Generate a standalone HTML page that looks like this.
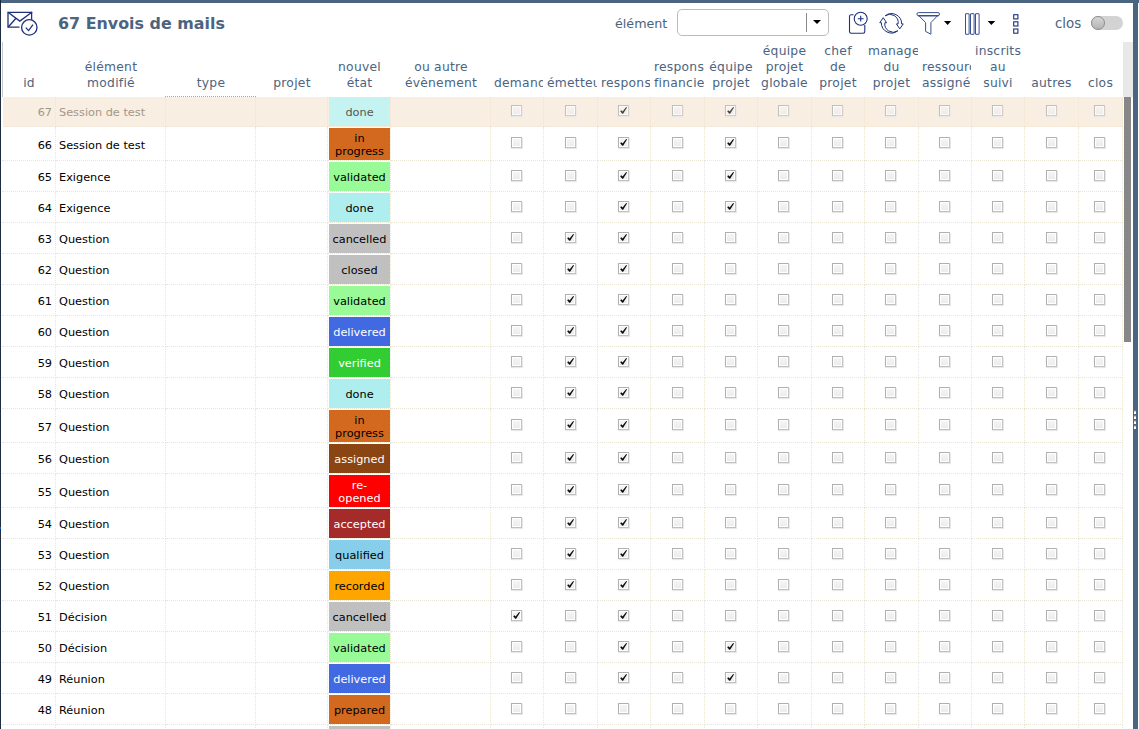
<!DOCTYPE html>
<html lang="fr"><head><meta charset="utf-8"><title>Envois de mails</title>
<style>
html,body{margin:0;padding:0;}
body{width:1139px;height:729px;overflow:hidden;background:#fff;position:relative;font-family:"DejaVu Sans","Liberation Sans",sans-serif;font-size:11.3px;color:#000;}
.abs{position:absolute;}
#topbar{left:0;top:0;width:1139px;height:3px;background:#4b6480;}
#leftb{left:0;top:0;width:1px;height:729px;background:#1e2d42;}
#rightb{left:1133px;top:0;width:5px;height:729px;background:#4b6480;}
#title{left:58px;top:14px;font-size:15.9px;font-weight:bold;color:#4b6480;white-space:nowrap;line-height:20px;}
.lbl{font-size:12.3px;color:#4b6480;white-space:nowrap;line-height:16px;}
#sel{left:677px;top:9px;width:150px;height:25px;border:1px solid #bcbcbc;border-radius:5px;background:#fff;}
#sel i{position:absolute;left:128px;top:3px;width:1px;height:19px;background:#8a8a8a;}
#sel b{position:absolute;left:135px;top:10px;width:0;height:0;border-left:4px solid transparent;border-right:4px solid transparent;border-top:4px solid #000;}
.hd{position:absolute;top:42px;height:54px;overflow:hidden;font-size:12.3px;letter-spacing:0.25px;color:#4b6480;line-height:16px;text-align:center;white-space:nowrap;}
.hd span{position:absolute;left:0;right:0;bottom:5px;}
.hd.c{text-align:left;}
.hd.c span{left:3px;right:3px;text-align:center;}
.row{position:absolute;left:2px;width:1121px;}
.row.sel{background:#f9eee2;color:#a3968a;}
.cell{position:absolute;top:0;bottom:0;border-right:1px dotted #e9e6d6;border-bottom:1px dotted #e9e6d6;box-sizing:border-box;}
.row.sel .cell{border-color:#f2e4d2;}
.id{text-align:right;padding-right:3px;}
.tx{white-space:nowrap;}
.st{position:absolute;left:1px;right:0;top:1px;bottom:0;padding-top:2px;box-sizing:border-box;text-align:center;line-height:13px;display:flex;align-items:center;justify-content:center;}
.cb{position:absolute;width:7px;height:7px;border:1px solid #b4b4b4;border-top-color:#b0b0b0;border-left-color:#b0b0b0;border-right-color:#c4c4c4;border-bottom-color:#c0c0c0;background:linear-gradient(#f6f6f6,#ebebeb);box-shadow:inset 0 0 0 1px #fff,1px 1px 0 #e8e8e8,0 1px 1px rgba(0,0,0,.08);padding:1px;}
.cb svg{position:absolute;left:0;top:0;width:9px;height:9px;}
.row.sel .cb{opacity:.75;}
</style></head><body>

<div class="abs" id="topbar"></div><div class="abs" id="leftb"></div><div class="abs" id="rightb"></div>
<div class="abs" style="left:2px;top:42px;width:1px;height:55px;background:#c8c8c8;"></div>
<div class="abs" style="left:165px;top:96px;width:91px;height:0;border-top:1px dotted #a8a8a8;"></div>
<svg class="abs" style="left:4px;top:8px" width="40" height="32" viewBox="4 8 40 32" fill="none" stroke="#1d3278" stroke-width="1.3">
<path d="M19.5 27.2H8V12.3H31.6V19.8"/><path d="M8 12.3L19.8 21.1L32.2 12"/><path d="M8 27.2L16 18.2"/>
<circle cx="29.3" cy="27.4" r="7.7" fill="#fff"/><path d="M25.8 27.6L28.6 30.6L33 24.6"/></svg>
<div class="abs" id="title">67 Envois de mails</div>
<div class="abs lbl" style="left:615px;top:16px;font-size:12.7px;">élément</div>
<div class="abs" id="sel"><i></i><b></b></div>
<svg class="abs" style="left:845px;top:8px" width="180" height="30" viewBox="845 8 180 30" fill="none" stroke="#1d3278" stroke-width="1.1">
<path d="M853.6 14.8H851.2Q849.5 14.8 849.5 16.5V31.6Q849.5 33.3 851.2 33.3H863.1Q864.8 33.3 864.8 31.6V25"/>
<circle cx="860.7" cy="18.7" r="6.5"/><path d="M857.8 18.7H863.6M860.7 15.8V21.6"/>
<path d="M885.2 15.8A10.1 10.1 0 0 1 901.6 23.9L903.2 23.9L899.8 28.9L896.4 23.9L898.1 23.9A8.3 8.3 0 0 0 885.2 15.8Z" stroke-width="1"/>
<path d="M897.8 30.8A10.1 10.1 0 0 1 881.4 22.7L879.8 22.7L883.2 17.7L886.6 22.7L884.9 22.7A8.3 8.3 0 0 0 897.8 30.8Z" stroke-width="1"/>
<g stroke="#3a4f95" stroke-width="1"><rect x="916.9" y="12.6" width="22.6" height="3" rx="1.5"/>
<path d="M919 15.8L925.6 22.6V31.4L930.9 34.2V22.6L937.5 15.8" stroke-linejoin="miter"/><path d="M918 15.9H938.5" stroke="#2a3f88"/></g>
<path d="M944 21H951.2L947.6 25Z" fill="#000" stroke="none"/>
<g stroke="#3a4f95" stroke-width="1"><rect x="965.5" y="13.7" width="3.6" height="20.6" rx="0.3"/><rect x="970.5" y="13.7" width="3.6" height="20.6" rx="0.3"/><rect x="975.5" y="13.7" width="3.6" height="20.6" rx="0.3"/></g>
<path d="M987.6 21H995.2L991.4 25Z" fill="#000" stroke="none"/>
<rect x="1013.7" y="14.7" width="4.2" height="4.2"/><rect x="1013.7" y="21.8" width="4.2" height="4.2"/><rect x="1013.7" y="29" width="4.2" height="4.2"/>
</svg>
<div class="abs lbl" style="left:1055px;top:16px;font-size:13.4px;">clos</div>
<div class="abs" style="left:1091px;top:16px;width:32px;height:14px;border-radius:7px;background:#d3d3d3;"></div>
<div class="abs" style="left:1091px;top:16px;width:12px;height:12px;border-radius:7px;border:1px solid #8c8c8c;background:linear-gradient(#d6d6d6,#b4b4b4);"></div>
<div class="abs" style="left:1123px;top:42px;width:10px;height:55px;background:#e8e8e8;"></div>
<div class="abs" style="left:1124px;top:97px;width:7px;height:245px;background:#878787;"></div>
<div class="abs" style="left:1134px;top:410px;width:2px;height:1px;background:#8a7f78;"></div><div class="abs" style="left:1134px;top:411px;width:2px;height:1px;background:#c9c9c9;"></div><div class="abs" style="left:1134px;top:412px;width:2px;height:2px;background:#fff;"></div>
<div class="abs" style="left:1134px;top:415px;width:2px;height:1px;background:#8a7f78;"></div><div class="abs" style="left:1134px;top:416px;width:2px;height:1px;background:#c9c9c9;"></div><div class="abs" style="left:1134px;top:417px;width:2px;height:2px;background:#fff;"></div>
<div class="abs" style="left:1134px;top:420px;width:2px;height:1px;background:#8a7f78;"></div><div class="abs" style="left:1134px;top:421px;width:2px;height:1px;background:#c9c9c9;"></div><div class="abs" style="left:1134px;top:422px;width:2px;height:2px;background:#fff;"></div>
<div class="abs" style="left:1134px;top:425px;width:2px;height:1px;background:#8a7f78;"></div><div class="abs" style="left:1134px;top:426px;width:2px;height:1px;background:#c9c9c9;"></div><div class="abs" style="left:1134px;top:427px;width:2px;height:2px;background:#fff;"></div>
<div class="hd" style="left:2px;width:54px;"><span>id</span></div>
<div class="hd" style="left:56px;width:110px;"><span>élément<br>modifié</span></div>
<div class="hd" style="left:166px;width:90px;"><span>type</span></div>
<div class="hd" style="left:256px;width:72px;"><span>projet</span></div>
<div class="hd" style="left:328px;width:63px;"><span>nouvel<br>état</span></div>
<div class="hd" style="left:391px;width:100px;"><span>ou autre<br>évènement</span></div>
<div class="hd c" style="left:491px;width:52px;"><span>demandeur</span></div>
<div class="hd c" style="left:544px;width:53px;"><span>émetteur</span></div>
<div class="hd c" style="left:598px;width:52px;"><span>responsable</span></div>
<div class="hd c" style="left:651px;width:53px;"><span>responsable<br>financier</span></div>
<div class="hd c" style="left:705px;width:52px;"><span>équipe<br>projet</span></div>
<div class="hd c" style="left:758px;width:53px;"><span>équipe<br>projet<br>globale</span></div>
<div class="hd c" style="left:812px;width:52px;"><span>chef<br>de<br>projet</span></div>
<div class="hd c" style="left:865px;width:53px;"><span>manager<br>du<br>projet</span></div>
<div class="hd c" style="left:919px;width:52px;"><span>ressource<br>assignée</span></div>
<div class="hd c" style="left:972px;width:52px;"><span>inscrits<br>au<br>suivi</span></div>
<div class="hd c" style="left:1025px;width:53px;"><span>autres</span></div>
<div class="hd c" style="left:1079px;width:43px;"><span>clos</span></div>
<div class="row sel" style="top:97px;height:30px;">
<div class="cell" style="left:0px;width:54px;"><div class="id" style="line-height:28px;padding-top:2px;">67</div></div>
<div class="cell" style="left:54px;width:110px;"><div class="tx" style="line-height:28px;padding-left:3px;padding-top:2px;">Session de test</div></div>
<div class="cell" style="left:164px;width:90px;"></div>
<div class="cell" style="left:254px;width:72px;"></div>
<div class="cell" style="left:326px;width:63px;"><div class="st" style="background:#c5f3f1;color:#555;top:0px;">done</div></div>
<div class="cell" style="left:389px;width:100px;"></div>
<div class="cell" style="left:489px;width:53px;"><div class="cb" style="left:20px;top:8px;"></div></div>
<div class="cell" style="left:542px;width:54px;"><div class="cb" style="left:21px;top:8px;"></div></div>
<div class="cell" style="left:596px;width:53px;"><div class="cb" style="left:20px;top:8px;"><svg viewBox="1 1 9 9"><path d="M2.2 6.3L4.3 8.8L5.1 8.8L9 2.4L8.2 2L4.6 6.6L3.3 5.2Z" fill="#0a0a0a"/></svg></div></div>
<div class="cell" style="left:649px;width:54px;"><div class="cb" style="left:21px;top:8px;"></div></div>
<div class="cell" style="left:703px;width:53px;"><div class="cb" style="left:20px;top:8px;"><svg viewBox="1 1 9 9"><path d="M2.2 6.3L4.3 8.8L5.1 8.8L9 2.4L8.2 2L4.6 6.6L3.3 5.2Z" fill="#0a0a0a"/></svg></div></div>
<div class="cell" style="left:756px;width:54px;"><div class="cb" style="left:20px;top:8px;"></div></div>
<div class="cell" style="left:810px;width:53px;"><div class="cb" style="left:20px;top:8px;"></div></div>
<div class="cell" style="left:863px;width:54px;"><div class="cb" style="left:20px;top:8px;"></div></div>
<div class="cell" style="left:917px;width:53px;"><div class="cb" style="left:20px;top:8px;"></div></div>
<div class="cell" style="left:970px;width:53px;"><div class="cb" style="left:20px;top:8px;"></div></div>
<div class="cell" style="left:1023px;width:54px;"><div class="cb" style="left:21px;top:8px;"></div></div>
<div class="cell" style="left:1077px;width:44px;"><div class="cb" style="left:15px;top:8px;"></div></div>
</div>
<div class="row" style="top:127px;height:34px;">
<div class="cell" style="left:0px;width:54px;"><div class="id" style="line-height:33px;padding-top:2px;">66</div></div>
<div class="cell" style="left:54px;width:110px;"><div class="tx" style="line-height:33px;padding-left:3px;padding-top:2px;">Session de test</div></div>
<div class="cell" style="left:164px;width:90px;"></div>
<div class="cell" style="left:254px;width:72px;"></div>
<div class="cell" style="left:326px;width:63px;"><div class="st" style="background:#d2691e;color:#000;top:1px;">in<br>progress</div></div>
<div class="cell" style="left:389px;width:100px;"></div>
<div class="cell" style="left:489px;width:53px;"><div class="cb" style="left:20px;top:10px;"></div></div>
<div class="cell" style="left:542px;width:54px;"><div class="cb" style="left:21px;top:10px;"></div></div>
<div class="cell" style="left:596px;width:53px;"><div class="cb" style="left:20px;top:10px;"><svg viewBox="1 1 9 9"><path d="M2.2 6.3L4.3 8.8L5.1 8.8L9 2.4L8.2 2L4.6 6.6L3.3 5.2Z" fill="#0a0a0a"/></svg></div></div>
<div class="cell" style="left:649px;width:54px;"><div class="cb" style="left:21px;top:10px;"></div></div>
<div class="cell" style="left:703px;width:53px;"><div class="cb" style="left:20px;top:10px;"><svg viewBox="1 1 9 9"><path d="M2.2 6.3L4.3 8.8L5.1 8.8L9 2.4L8.2 2L4.6 6.6L3.3 5.2Z" fill="#0a0a0a"/></svg></div></div>
<div class="cell" style="left:756px;width:54px;"><div class="cb" style="left:20px;top:10px;"></div></div>
<div class="cell" style="left:810px;width:53px;"><div class="cb" style="left:20px;top:10px;"></div></div>
<div class="cell" style="left:863px;width:54px;"><div class="cb" style="left:20px;top:10px;"></div></div>
<div class="cell" style="left:917px;width:53px;"><div class="cb" style="left:20px;top:10px;"></div></div>
<div class="cell" style="left:970px;width:53px;"><div class="cb" style="left:20px;top:10px;"></div></div>
<div class="cell" style="left:1023px;width:54px;"><div class="cb" style="left:21px;top:10px;"></div></div>
<div class="cell" style="left:1077px;width:44px;"><div class="cb" style="left:15px;top:10px;"></div></div>
</div>
<div class="row" style="top:161px;height:31px;">
<div class="cell" style="left:0px;width:54px;"><div class="id" style="line-height:30px;padding-top:2px;">65</div></div>
<div class="cell" style="left:54px;width:110px;"><div class="tx" style="line-height:30px;padding-left:3px;padding-top:2px;">Exigence</div></div>
<div class="cell" style="left:164px;width:90px;"></div>
<div class="cell" style="left:254px;width:72px;"></div>
<div class="cell" style="left:326px;width:63px;"><div class="st" style="background:#98fb98;color:#000;top:1px;">validated</div></div>
<div class="cell" style="left:389px;width:100px;"></div>
<div class="cell" style="left:489px;width:53px;"><div class="cb" style="left:20px;top:9px;"></div></div>
<div class="cell" style="left:542px;width:54px;"><div class="cb" style="left:21px;top:9px;"></div></div>
<div class="cell" style="left:596px;width:53px;"><div class="cb" style="left:20px;top:9px;"><svg viewBox="1 1 9 9"><path d="M2.2 6.3L4.3 8.8L5.1 8.8L9 2.4L8.2 2L4.6 6.6L3.3 5.2Z" fill="#0a0a0a"/></svg></div></div>
<div class="cell" style="left:649px;width:54px;"><div class="cb" style="left:21px;top:9px;"></div></div>
<div class="cell" style="left:703px;width:53px;"><div class="cb" style="left:20px;top:9px;"><svg viewBox="1 1 9 9"><path d="M2.2 6.3L4.3 8.8L5.1 8.8L9 2.4L8.2 2L4.6 6.6L3.3 5.2Z" fill="#0a0a0a"/></svg></div></div>
<div class="cell" style="left:756px;width:54px;"><div class="cb" style="left:20px;top:9px;"></div></div>
<div class="cell" style="left:810px;width:53px;"><div class="cb" style="left:20px;top:9px;"></div></div>
<div class="cell" style="left:863px;width:54px;"><div class="cb" style="left:20px;top:9px;"></div></div>
<div class="cell" style="left:917px;width:53px;"><div class="cb" style="left:20px;top:9px;"></div></div>
<div class="cell" style="left:970px;width:53px;"><div class="cb" style="left:20px;top:9px;"></div></div>
<div class="cell" style="left:1023px;width:54px;"><div class="cb" style="left:21px;top:9px;"></div></div>
<div class="cell" style="left:1077px;width:44px;"><div class="cb" style="left:15px;top:9px;"></div></div>
</div>
<div class="row" style="top:192px;height:31px;">
<div class="cell" style="left:0px;width:54px;"><div class="id" style="line-height:30px;padding-top:2px;">64</div></div>
<div class="cell" style="left:54px;width:110px;"><div class="tx" style="line-height:30px;padding-left:3px;padding-top:2px;">Exigence</div></div>
<div class="cell" style="left:164px;width:90px;"></div>
<div class="cell" style="left:254px;width:72px;"></div>
<div class="cell" style="left:326px;width:63px;"><div class="st" style="background:#afeeee;color:#000;top:1px;">done</div></div>
<div class="cell" style="left:389px;width:100px;"></div>
<div class="cell" style="left:489px;width:53px;"><div class="cb" style="left:20px;top:9px;"></div></div>
<div class="cell" style="left:542px;width:54px;"><div class="cb" style="left:21px;top:9px;"></div></div>
<div class="cell" style="left:596px;width:53px;"><div class="cb" style="left:20px;top:9px;"><svg viewBox="1 1 9 9"><path d="M2.2 6.3L4.3 8.8L5.1 8.8L9 2.4L8.2 2L4.6 6.6L3.3 5.2Z" fill="#0a0a0a"/></svg></div></div>
<div class="cell" style="left:649px;width:54px;"><div class="cb" style="left:21px;top:9px;"></div></div>
<div class="cell" style="left:703px;width:53px;"><div class="cb" style="left:20px;top:9px;"><svg viewBox="1 1 9 9"><path d="M2.2 6.3L4.3 8.8L5.1 8.8L9 2.4L8.2 2L4.6 6.6L3.3 5.2Z" fill="#0a0a0a"/></svg></div></div>
<div class="cell" style="left:756px;width:54px;"><div class="cb" style="left:20px;top:9px;"></div></div>
<div class="cell" style="left:810px;width:53px;"><div class="cb" style="left:20px;top:9px;"></div></div>
<div class="cell" style="left:863px;width:54px;"><div class="cb" style="left:20px;top:9px;"></div></div>
<div class="cell" style="left:917px;width:53px;"><div class="cb" style="left:20px;top:9px;"></div></div>
<div class="cell" style="left:970px;width:53px;"><div class="cb" style="left:20px;top:9px;"></div></div>
<div class="cell" style="left:1023px;width:54px;"><div class="cb" style="left:21px;top:9px;"></div></div>
<div class="cell" style="left:1077px;width:44px;"><div class="cb" style="left:15px;top:9px;"></div></div>
</div>
<div class="row" style="top:223px;height:31px;">
<div class="cell" style="left:0px;width:54px;"><div class="id" style="line-height:30px;padding-top:2px;">63</div></div>
<div class="cell" style="left:54px;width:110px;"><div class="tx" style="line-height:30px;padding-left:3px;padding-top:2px;">Question</div></div>
<div class="cell" style="left:164px;width:90px;"></div>
<div class="cell" style="left:254px;width:72px;"></div>
<div class="cell" style="left:326px;width:63px;"><div class="st" style="background:#c0c0c0;color:#000;top:1px;">cancelled</div></div>
<div class="cell" style="left:389px;width:100px;"></div>
<div class="cell" style="left:489px;width:53px;"><div class="cb" style="left:20px;top:9px;"></div></div>
<div class="cell" style="left:542px;width:54px;"><div class="cb" style="left:21px;top:9px;"><svg viewBox="1 1 9 9"><path d="M2.2 6.3L4.3 8.8L5.1 8.8L9 2.4L8.2 2L4.6 6.6L3.3 5.2Z" fill="#0a0a0a"/></svg></div></div>
<div class="cell" style="left:596px;width:53px;"><div class="cb" style="left:20px;top:9px;"><svg viewBox="1 1 9 9"><path d="M2.2 6.3L4.3 8.8L5.1 8.8L9 2.4L8.2 2L4.6 6.6L3.3 5.2Z" fill="#0a0a0a"/></svg></div></div>
<div class="cell" style="left:649px;width:54px;"><div class="cb" style="left:21px;top:9px;"></div></div>
<div class="cell" style="left:703px;width:53px;"><div class="cb" style="left:20px;top:9px;"></div></div>
<div class="cell" style="left:756px;width:54px;"><div class="cb" style="left:20px;top:9px;"></div></div>
<div class="cell" style="left:810px;width:53px;"><div class="cb" style="left:20px;top:9px;"></div></div>
<div class="cell" style="left:863px;width:54px;"><div class="cb" style="left:20px;top:9px;"></div></div>
<div class="cell" style="left:917px;width:53px;"><div class="cb" style="left:20px;top:9px;"></div></div>
<div class="cell" style="left:970px;width:53px;"><div class="cb" style="left:20px;top:9px;"></div></div>
<div class="cell" style="left:1023px;width:54px;"><div class="cb" style="left:21px;top:9px;"></div></div>
<div class="cell" style="left:1077px;width:44px;"><div class="cb" style="left:15px;top:9px;"></div></div>
</div>
<div class="row" style="top:254px;height:31px;">
<div class="cell" style="left:0px;width:54px;"><div class="id" style="line-height:30px;padding-top:2px;">62</div></div>
<div class="cell" style="left:54px;width:110px;"><div class="tx" style="line-height:30px;padding-left:3px;padding-top:2px;">Question</div></div>
<div class="cell" style="left:164px;width:90px;"></div>
<div class="cell" style="left:254px;width:72px;"></div>
<div class="cell" style="left:326px;width:63px;"><div class="st" style="background:#c0c0c0;color:#000;top:1px;">closed</div></div>
<div class="cell" style="left:389px;width:100px;"></div>
<div class="cell" style="left:489px;width:53px;"><div class="cb" style="left:20px;top:9px;"></div></div>
<div class="cell" style="left:542px;width:54px;"><div class="cb" style="left:21px;top:9px;"><svg viewBox="1 1 9 9"><path d="M2.2 6.3L4.3 8.8L5.1 8.8L9 2.4L8.2 2L4.6 6.6L3.3 5.2Z" fill="#0a0a0a"/></svg></div></div>
<div class="cell" style="left:596px;width:53px;"><div class="cb" style="left:20px;top:9px;"><svg viewBox="1 1 9 9"><path d="M2.2 6.3L4.3 8.8L5.1 8.8L9 2.4L8.2 2L4.6 6.6L3.3 5.2Z" fill="#0a0a0a"/></svg></div></div>
<div class="cell" style="left:649px;width:54px;"><div class="cb" style="left:21px;top:9px;"></div></div>
<div class="cell" style="left:703px;width:53px;"><div class="cb" style="left:20px;top:9px;"></div></div>
<div class="cell" style="left:756px;width:54px;"><div class="cb" style="left:20px;top:9px;"></div></div>
<div class="cell" style="left:810px;width:53px;"><div class="cb" style="left:20px;top:9px;"></div></div>
<div class="cell" style="left:863px;width:54px;"><div class="cb" style="left:20px;top:9px;"></div></div>
<div class="cell" style="left:917px;width:53px;"><div class="cb" style="left:20px;top:9px;"></div></div>
<div class="cell" style="left:970px;width:53px;"><div class="cb" style="left:20px;top:9px;"></div></div>
<div class="cell" style="left:1023px;width:54px;"><div class="cb" style="left:21px;top:9px;"></div></div>
<div class="cell" style="left:1077px;width:44px;"><div class="cb" style="left:15px;top:9px;"></div></div>
</div>
<div class="row" style="top:285px;height:31px;">
<div class="cell" style="left:0px;width:54px;"><div class="id" style="line-height:30px;padding-top:2px;">61</div></div>
<div class="cell" style="left:54px;width:110px;"><div class="tx" style="line-height:30px;padding-left:3px;padding-top:2px;">Question</div></div>
<div class="cell" style="left:164px;width:90px;"></div>
<div class="cell" style="left:254px;width:72px;"></div>
<div class="cell" style="left:326px;width:63px;"><div class="st" style="background:#98fb98;color:#000;top:1px;">validated</div></div>
<div class="cell" style="left:389px;width:100px;"></div>
<div class="cell" style="left:489px;width:53px;"><div class="cb" style="left:20px;top:9px;"></div></div>
<div class="cell" style="left:542px;width:54px;"><div class="cb" style="left:21px;top:9px;"><svg viewBox="1 1 9 9"><path d="M2.2 6.3L4.3 8.8L5.1 8.8L9 2.4L8.2 2L4.6 6.6L3.3 5.2Z" fill="#0a0a0a"/></svg></div></div>
<div class="cell" style="left:596px;width:53px;"><div class="cb" style="left:20px;top:9px;"><svg viewBox="1 1 9 9"><path d="M2.2 6.3L4.3 8.8L5.1 8.8L9 2.4L8.2 2L4.6 6.6L3.3 5.2Z" fill="#0a0a0a"/></svg></div></div>
<div class="cell" style="left:649px;width:54px;"><div class="cb" style="left:21px;top:9px;"></div></div>
<div class="cell" style="left:703px;width:53px;"><div class="cb" style="left:20px;top:9px;"></div></div>
<div class="cell" style="left:756px;width:54px;"><div class="cb" style="left:20px;top:9px;"></div></div>
<div class="cell" style="left:810px;width:53px;"><div class="cb" style="left:20px;top:9px;"></div></div>
<div class="cell" style="left:863px;width:54px;"><div class="cb" style="left:20px;top:9px;"></div></div>
<div class="cell" style="left:917px;width:53px;"><div class="cb" style="left:20px;top:9px;"></div></div>
<div class="cell" style="left:970px;width:53px;"><div class="cb" style="left:20px;top:9px;"></div></div>
<div class="cell" style="left:1023px;width:54px;"><div class="cb" style="left:21px;top:9px;"></div></div>
<div class="cell" style="left:1077px;width:44px;"><div class="cb" style="left:15px;top:9px;"></div></div>
</div>
<div class="row" style="top:316px;height:31px;">
<div class="cell" style="left:0px;width:54px;"><div class="id" style="line-height:30px;padding-top:2px;">60</div></div>
<div class="cell" style="left:54px;width:110px;"><div class="tx" style="line-height:30px;padding-left:3px;padding-top:2px;">Question</div></div>
<div class="cell" style="left:164px;width:90px;"></div>
<div class="cell" style="left:254px;width:72px;"></div>
<div class="cell" style="left:326px;width:63px;"><div class="st" style="background:#4169e1;color:#fff;top:1px;">delivered</div></div>
<div class="cell" style="left:389px;width:100px;"></div>
<div class="cell" style="left:489px;width:53px;"><div class="cb" style="left:20px;top:9px;"></div></div>
<div class="cell" style="left:542px;width:54px;"><div class="cb" style="left:21px;top:9px;"><svg viewBox="1 1 9 9"><path d="M2.2 6.3L4.3 8.8L5.1 8.8L9 2.4L8.2 2L4.6 6.6L3.3 5.2Z" fill="#0a0a0a"/></svg></div></div>
<div class="cell" style="left:596px;width:53px;"><div class="cb" style="left:20px;top:9px;"><svg viewBox="1 1 9 9"><path d="M2.2 6.3L4.3 8.8L5.1 8.8L9 2.4L8.2 2L4.6 6.6L3.3 5.2Z" fill="#0a0a0a"/></svg></div></div>
<div class="cell" style="left:649px;width:54px;"><div class="cb" style="left:21px;top:9px;"></div></div>
<div class="cell" style="left:703px;width:53px;"><div class="cb" style="left:20px;top:9px;"></div></div>
<div class="cell" style="left:756px;width:54px;"><div class="cb" style="left:20px;top:9px;"></div></div>
<div class="cell" style="left:810px;width:53px;"><div class="cb" style="left:20px;top:9px;"></div></div>
<div class="cell" style="left:863px;width:54px;"><div class="cb" style="left:20px;top:9px;"></div></div>
<div class="cell" style="left:917px;width:53px;"><div class="cb" style="left:20px;top:9px;"></div></div>
<div class="cell" style="left:970px;width:53px;"><div class="cb" style="left:20px;top:9px;"></div></div>
<div class="cell" style="left:1023px;width:54px;"><div class="cb" style="left:21px;top:9px;"></div></div>
<div class="cell" style="left:1077px;width:44px;"><div class="cb" style="left:15px;top:9px;"></div></div>
</div>
<div class="row" style="top:347px;height:31px;">
<div class="cell" style="left:0px;width:54px;"><div class="id" style="line-height:30px;padding-top:2px;">59</div></div>
<div class="cell" style="left:54px;width:110px;"><div class="tx" style="line-height:30px;padding-left:3px;padding-top:2px;">Question</div></div>
<div class="cell" style="left:164px;width:90px;"></div>
<div class="cell" style="left:254px;width:72px;"></div>
<div class="cell" style="left:326px;width:63px;"><div class="st" style="background:#32cd32;color:#fff;top:1px;">verified</div></div>
<div class="cell" style="left:389px;width:100px;"></div>
<div class="cell" style="left:489px;width:53px;"><div class="cb" style="left:20px;top:9px;"></div></div>
<div class="cell" style="left:542px;width:54px;"><div class="cb" style="left:21px;top:9px;"><svg viewBox="1 1 9 9"><path d="M2.2 6.3L4.3 8.8L5.1 8.8L9 2.4L8.2 2L4.6 6.6L3.3 5.2Z" fill="#0a0a0a"/></svg></div></div>
<div class="cell" style="left:596px;width:53px;"><div class="cb" style="left:20px;top:9px;"><svg viewBox="1 1 9 9"><path d="M2.2 6.3L4.3 8.8L5.1 8.8L9 2.4L8.2 2L4.6 6.6L3.3 5.2Z" fill="#0a0a0a"/></svg></div></div>
<div class="cell" style="left:649px;width:54px;"><div class="cb" style="left:21px;top:9px;"></div></div>
<div class="cell" style="left:703px;width:53px;"><div class="cb" style="left:20px;top:9px;"></div></div>
<div class="cell" style="left:756px;width:54px;"><div class="cb" style="left:20px;top:9px;"></div></div>
<div class="cell" style="left:810px;width:53px;"><div class="cb" style="left:20px;top:9px;"></div></div>
<div class="cell" style="left:863px;width:54px;"><div class="cb" style="left:20px;top:9px;"></div></div>
<div class="cell" style="left:917px;width:53px;"><div class="cb" style="left:20px;top:9px;"></div></div>
<div class="cell" style="left:970px;width:53px;"><div class="cb" style="left:20px;top:9px;"></div></div>
<div class="cell" style="left:1023px;width:54px;"><div class="cb" style="left:21px;top:9px;"></div></div>
<div class="cell" style="left:1077px;width:44px;"><div class="cb" style="left:15px;top:9px;"></div></div>
</div>
<div class="row" style="top:378px;height:31px;">
<div class="cell" style="left:0px;width:54px;"><div class="id" style="line-height:30px;padding-top:2px;">58</div></div>
<div class="cell" style="left:54px;width:110px;"><div class="tx" style="line-height:30px;padding-left:3px;padding-top:2px;">Question</div></div>
<div class="cell" style="left:164px;width:90px;"></div>
<div class="cell" style="left:254px;width:72px;"></div>
<div class="cell" style="left:326px;width:63px;"><div class="st" style="background:#afeeee;color:#000;top:1px;">done</div></div>
<div class="cell" style="left:389px;width:100px;"></div>
<div class="cell" style="left:489px;width:53px;"><div class="cb" style="left:20px;top:9px;"></div></div>
<div class="cell" style="left:542px;width:54px;"><div class="cb" style="left:21px;top:9px;"><svg viewBox="1 1 9 9"><path d="M2.2 6.3L4.3 8.8L5.1 8.8L9 2.4L8.2 2L4.6 6.6L3.3 5.2Z" fill="#0a0a0a"/></svg></div></div>
<div class="cell" style="left:596px;width:53px;"><div class="cb" style="left:20px;top:9px;"><svg viewBox="1 1 9 9"><path d="M2.2 6.3L4.3 8.8L5.1 8.8L9 2.4L8.2 2L4.6 6.6L3.3 5.2Z" fill="#0a0a0a"/></svg></div></div>
<div class="cell" style="left:649px;width:54px;"><div class="cb" style="left:21px;top:9px;"></div></div>
<div class="cell" style="left:703px;width:53px;"><div class="cb" style="left:20px;top:9px;"></div></div>
<div class="cell" style="left:756px;width:54px;"><div class="cb" style="left:20px;top:9px;"></div></div>
<div class="cell" style="left:810px;width:53px;"><div class="cb" style="left:20px;top:9px;"></div></div>
<div class="cell" style="left:863px;width:54px;"><div class="cb" style="left:20px;top:9px;"></div></div>
<div class="cell" style="left:917px;width:53px;"><div class="cb" style="left:20px;top:9px;"></div></div>
<div class="cell" style="left:970px;width:53px;"><div class="cb" style="left:20px;top:9px;"></div></div>
<div class="cell" style="left:1023px;width:54px;"><div class="cb" style="left:21px;top:9px;"></div></div>
<div class="cell" style="left:1077px;width:44px;"><div class="cb" style="left:15px;top:9px;"></div></div>
</div>
<div class="row" style="top:409px;height:34px;">
<div class="cell" style="left:0px;width:54px;"><div class="id" style="line-height:33px;padding-top:2px;">57</div></div>
<div class="cell" style="left:54px;width:110px;"><div class="tx" style="line-height:33px;padding-left:3px;padding-top:2px;">Question</div></div>
<div class="cell" style="left:164px;width:90px;"></div>
<div class="cell" style="left:254px;width:72px;"></div>
<div class="cell" style="left:326px;width:63px;"><div class="st" style="background:#d2691e;color:#000;top:1px;">in<br>progress</div></div>
<div class="cell" style="left:389px;width:100px;"></div>
<div class="cell" style="left:489px;width:53px;"><div class="cb" style="left:20px;top:10px;"></div></div>
<div class="cell" style="left:542px;width:54px;"><div class="cb" style="left:21px;top:10px;"><svg viewBox="1 1 9 9"><path d="M2.2 6.3L4.3 8.8L5.1 8.8L9 2.4L8.2 2L4.6 6.6L3.3 5.2Z" fill="#0a0a0a"/></svg></div></div>
<div class="cell" style="left:596px;width:53px;"><div class="cb" style="left:20px;top:10px;"><svg viewBox="1 1 9 9"><path d="M2.2 6.3L4.3 8.8L5.1 8.8L9 2.4L8.2 2L4.6 6.6L3.3 5.2Z" fill="#0a0a0a"/></svg></div></div>
<div class="cell" style="left:649px;width:54px;"><div class="cb" style="left:21px;top:10px;"></div></div>
<div class="cell" style="left:703px;width:53px;"><div class="cb" style="left:20px;top:10px;"></div></div>
<div class="cell" style="left:756px;width:54px;"><div class="cb" style="left:20px;top:10px;"></div></div>
<div class="cell" style="left:810px;width:53px;"><div class="cb" style="left:20px;top:10px;"></div></div>
<div class="cell" style="left:863px;width:54px;"><div class="cb" style="left:20px;top:10px;"></div></div>
<div class="cell" style="left:917px;width:53px;"><div class="cb" style="left:20px;top:10px;"></div></div>
<div class="cell" style="left:970px;width:53px;"><div class="cb" style="left:20px;top:10px;"></div></div>
<div class="cell" style="left:1023px;width:54px;"><div class="cb" style="left:21px;top:10px;"></div></div>
<div class="cell" style="left:1077px;width:44px;"><div class="cb" style="left:15px;top:10px;"></div></div>
</div>
<div class="row" style="top:443px;height:31px;">
<div class="cell" style="left:0px;width:54px;"><div class="id" style="line-height:30px;padding-top:2px;">56</div></div>
<div class="cell" style="left:54px;width:110px;"><div class="tx" style="line-height:30px;padding-left:3px;padding-top:2px;">Question</div></div>
<div class="cell" style="left:164px;width:90px;"></div>
<div class="cell" style="left:254px;width:72px;"></div>
<div class="cell" style="left:326px;width:63px;"><div class="st" style="background:#8b4513;color:#fff;top:1px;">assigned</div></div>
<div class="cell" style="left:389px;width:100px;"></div>
<div class="cell" style="left:489px;width:53px;"><div class="cb" style="left:20px;top:9px;"></div></div>
<div class="cell" style="left:542px;width:54px;"><div class="cb" style="left:21px;top:9px;"><svg viewBox="1 1 9 9"><path d="M2.2 6.3L4.3 8.8L5.1 8.8L9 2.4L8.2 2L4.6 6.6L3.3 5.2Z" fill="#0a0a0a"/></svg></div></div>
<div class="cell" style="left:596px;width:53px;"><div class="cb" style="left:20px;top:9px;"><svg viewBox="1 1 9 9"><path d="M2.2 6.3L4.3 8.8L5.1 8.8L9 2.4L8.2 2L4.6 6.6L3.3 5.2Z" fill="#0a0a0a"/></svg></div></div>
<div class="cell" style="left:649px;width:54px;"><div class="cb" style="left:21px;top:9px;"></div></div>
<div class="cell" style="left:703px;width:53px;"><div class="cb" style="left:20px;top:9px;"></div></div>
<div class="cell" style="left:756px;width:54px;"><div class="cb" style="left:20px;top:9px;"></div></div>
<div class="cell" style="left:810px;width:53px;"><div class="cb" style="left:20px;top:9px;"></div></div>
<div class="cell" style="left:863px;width:54px;"><div class="cb" style="left:20px;top:9px;"></div></div>
<div class="cell" style="left:917px;width:53px;"><div class="cb" style="left:20px;top:9px;"></div></div>
<div class="cell" style="left:970px;width:53px;"><div class="cb" style="left:20px;top:9px;"></div></div>
<div class="cell" style="left:1023px;width:54px;"><div class="cb" style="left:21px;top:9px;"></div></div>
<div class="cell" style="left:1077px;width:44px;"><div class="cb" style="left:15px;top:9px;"></div></div>
</div>
<div class="row" style="top:474px;height:34px;">
<div class="cell" style="left:0px;width:54px;"><div class="id" style="line-height:33px;padding-top:2px;">55</div></div>
<div class="cell" style="left:54px;width:110px;"><div class="tx" style="line-height:33px;padding-left:3px;padding-top:2px;">Question</div></div>
<div class="cell" style="left:164px;width:90px;"></div>
<div class="cell" style="left:254px;width:72px;"></div>
<div class="cell" style="left:326px;width:63px;"><div class="st" style="background:#ff0000;color:#fff;top:1px;">re-<br>opened</div></div>
<div class="cell" style="left:389px;width:100px;"></div>
<div class="cell" style="left:489px;width:53px;"><div class="cb" style="left:20px;top:10px;"></div></div>
<div class="cell" style="left:542px;width:54px;"><div class="cb" style="left:21px;top:10px;"><svg viewBox="1 1 9 9"><path d="M2.2 6.3L4.3 8.8L5.1 8.8L9 2.4L8.2 2L4.6 6.6L3.3 5.2Z" fill="#0a0a0a"/></svg></div></div>
<div class="cell" style="left:596px;width:53px;"><div class="cb" style="left:20px;top:10px;"><svg viewBox="1 1 9 9"><path d="M2.2 6.3L4.3 8.8L5.1 8.8L9 2.4L8.2 2L4.6 6.6L3.3 5.2Z" fill="#0a0a0a"/></svg></div></div>
<div class="cell" style="left:649px;width:54px;"><div class="cb" style="left:21px;top:10px;"></div></div>
<div class="cell" style="left:703px;width:53px;"><div class="cb" style="left:20px;top:10px;"></div></div>
<div class="cell" style="left:756px;width:54px;"><div class="cb" style="left:20px;top:10px;"></div></div>
<div class="cell" style="left:810px;width:53px;"><div class="cb" style="left:20px;top:10px;"></div></div>
<div class="cell" style="left:863px;width:54px;"><div class="cb" style="left:20px;top:10px;"></div></div>
<div class="cell" style="left:917px;width:53px;"><div class="cb" style="left:20px;top:10px;"></div></div>
<div class="cell" style="left:970px;width:53px;"><div class="cb" style="left:20px;top:10px;"></div></div>
<div class="cell" style="left:1023px;width:54px;"><div class="cb" style="left:21px;top:10px;"></div></div>
<div class="cell" style="left:1077px;width:44px;"><div class="cb" style="left:15px;top:10px;"></div></div>
</div>
<div class="row" style="top:508px;height:31px;">
<div class="cell" style="left:0px;width:54px;"><div class="id" style="line-height:30px;padding-top:2px;">54</div></div>
<div class="cell" style="left:54px;width:110px;"><div class="tx" style="line-height:30px;padding-left:3px;padding-top:2px;">Question</div></div>
<div class="cell" style="left:164px;width:90px;"></div>
<div class="cell" style="left:254px;width:72px;"></div>
<div class="cell" style="left:326px;width:63px;"><div class="st" style="background:#a52a2a;color:#fff;top:1px;">accepted</div></div>
<div class="cell" style="left:389px;width:100px;"></div>
<div class="cell" style="left:489px;width:53px;"><div class="cb" style="left:20px;top:9px;"></div></div>
<div class="cell" style="left:542px;width:54px;"><div class="cb" style="left:21px;top:9px;"><svg viewBox="1 1 9 9"><path d="M2.2 6.3L4.3 8.8L5.1 8.8L9 2.4L8.2 2L4.6 6.6L3.3 5.2Z" fill="#0a0a0a"/></svg></div></div>
<div class="cell" style="left:596px;width:53px;"><div class="cb" style="left:20px;top:9px;"><svg viewBox="1 1 9 9"><path d="M2.2 6.3L4.3 8.8L5.1 8.8L9 2.4L8.2 2L4.6 6.6L3.3 5.2Z" fill="#0a0a0a"/></svg></div></div>
<div class="cell" style="left:649px;width:54px;"><div class="cb" style="left:21px;top:9px;"></div></div>
<div class="cell" style="left:703px;width:53px;"><div class="cb" style="left:20px;top:9px;"></div></div>
<div class="cell" style="left:756px;width:54px;"><div class="cb" style="left:20px;top:9px;"></div></div>
<div class="cell" style="left:810px;width:53px;"><div class="cb" style="left:20px;top:9px;"></div></div>
<div class="cell" style="left:863px;width:54px;"><div class="cb" style="left:20px;top:9px;"></div></div>
<div class="cell" style="left:917px;width:53px;"><div class="cb" style="left:20px;top:9px;"></div></div>
<div class="cell" style="left:970px;width:53px;"><div class="cb" style="left:20px;top:9px;"></div></div>
<div class="cell" style="left:1023px;width:54px;"><div class="cb" style="left:21px;top:9px;"></div></div>
<div class="cell" style="left:1077px;width:44px;"><div class="cb" style="left:15px;top:9px;"></div></div>
</div>
<div class="row" style="top:539px;height:31px;">
<div class="cell" style="left:0px;width:54px;"><div class="id" style="line-height:30px;padding-top:2px;">53</div></div>
<div class="cell" style="left:54px;width:110px;"><div class="tx" style="line-height:30px;padding-left:3px;padding-top:2px;">Question</div></div>
<div class="cell" style="left:164px;width:90px;"></div>
<div class="cell" style="left:254px;width:72px;"></div>
<div class="cell" style="left:326px;width:63px;"><div class="st" style="background:#87ceeb;color:#000;top:1px;">qualified</div></div>
<div class="cell" style="left:389px;width:100px;"></div>
<div class="cell" style="left:489px;width:53px;"><div class="cb" style="left:20px;top:9px;"></div></div>
<div class="cell" style="left:542px;width:54px;"><div class="cb" style="left:21px;top:9px;"><svg viewBox="1 1 9 9"><path d="M2.2 6.3L4.3 8.8L5.1 8.8L9 2.4L8.2 2L4.6 6.6L3.3 5.2Z" fill="#0a0a0a"/></svg></div></div>
<div class="cell" style="left:596px;width:53px;"><div class="cb" style="left:20px;top:9px;"><svg viewBox="1 1 9 9"><path d="M2.2 6.3L4.3 8.8L5.1 8.8L9 2.4L8.2 2L4.6 6.6L3.3 5.2Z" fill="#0a0a0a"/></svg></div></div>
<div class="cell" style="left:649px;width:54px;"><div class="cb" style="left:21px;top:9px;"></div></div>
<div class="cell" style="left:703px;width:53px;"><div class="cb" style="left:20px;top:9px;"></div></div>
<div class="cell" style="left:756px;width:54px;"><div class="cb" style="left:20px;top:9px;"></div></div>
<div class="cell" style="left:810px;width:53px;"><div class="cb" style="left:20px;top:9px;"></div></div>
<div class="cell" style="left:863px;width:54px;"><div class="cb" style="left:20px;top:9px;"></div></div>
<div class="cell" style="left:917px;width:53px;"><div class="cb" style="left:20px;top:9px;"></div></div>
<div class="cell" style="left:970px;width:53px;"><div class="cb" style="left:20px;top:9px;"></div></div>
<div class="cell" style="left:1023px;width:54px;"><div class="cb" style="left:21px;top:9px;"></div></div>
<div class="cell" style="left:1077px;width:44px;"><div class="cb" style="left:15px;top:9px;"></div></div>
</div>
<div class="row" style="top:570px;height:31px;">
<div class="cell" style="left:0px;width:54px;"><div class="id" style="line-height:30px;padding-top:2px;">52</div></div>
<div class="cell" style="left:54px;width:110px;"><div class="tx" style="line-height:30px;padding-left:3px;padding-top:2px;">Question</div></div>
<div class="cell" style="left:164px;width:90px;"></div>
<div class="cell" style="left:254px;width:72px;"></div>
<div class="cell" style="left:326px;width:63px;"><div class="st" style="background:#ffa500;color:#000;top:1px;">recorded</div></div>
<div class="cell" style="left:389px;width:100px;"></div>
<div class="cell" style="left:489px;width:53px;"><div class="cb" style="left:20px;top:9px;"></div></div>
<div class="cell" style="left:542px;width:54px;"><div class="cb" style="left:21px;top:9px;"><svg viewBox="1 1 9 9"><path d="M2.2 6.3L4.3 8.8L5.1 8.8L9 2.4L8.2 2L4.6 6.6L3.3 5.2Z" fill="#0a0a0a"/></svg></div></div>
<div class="cell" style="left:596px;width:53px;"><div class="cb" style="left:20px;top:9px;"><svg viewBox="1 1 9 9"><path d="M2.2 6.3L4.3 8.8L5.1 8.8L9 2.4L8.2 2L4.6 6.6L3.3 5.2Z" fill="#0a0a0a"/></svg></div></div>
<div class="cell" style="left:649px;width:54px;"><div class="cb" style="left:21px;top:9px;"></div></div>
<div class="cell" style="left:703px;width:53px;"><div class="cb" style="left:20px;top:9px;"></div></div>
<div class="cell" style="left:756px;width:54px;"><div class="cb" style="left:20px;top:9px;"></div></div>
<div class="cell" style="left:810px;width:53px;"><div class="cb" style="left:20px;top:9px;"></div></div>
<div class="cell" style="left:863px;width:54px;"><div class="cb" style="left:20px;top:9px;"></div></div>
<div class="cell" style="left:917px;width:53px;"><div class="cb" style="left:20px;top:9px;"></div></div>
<div class="cell" style="left:970px;width:53px;"><div class="cb" style="left:20px;top:9px;"></div></div>
<div class="cell" style="left:1023px;width:54px;"><div class="cb" style="left:21px;top:9px;"></div></div>
<div class="cell" style="left:1077px;width:44px;"><div class="cb" style="left:15px;top:9px;"></div></div>
</div>
<div class="row" style="top:601px;height:31px;">
<div class="cell" style="left:0px;width:54px;"><div class="id" style="line-height:30px;padding-top:2px;">51</div></div>
<div class="cell" style="left:54px;width:110px;"><div class="tx" style="line-height:30px;padding-left:3px;padding-top:2px;">Décision</div></div>
<div class="cell" style="left:164px;width:90px;"></div>
<div class="cell" style="left:254px;width:72px;"></div>
<div class="cell" style="left:326px;width:63px;"><div class="st" style="background:#c0c0c0;color:#000;top:1px;">cancelled</div></div>
<div class="cell" style="left:389px;width:100px;"></div>
<div class="cell" style="left:489px;width:53px;"><div class="cb" style="left:20px;top:9px;"><svg viewBox="1 1 9 9"><path d="M2.2 6.3L4.3 8.8L5.1 8.8L9 2.4L8.2 2L4.6 6.6L3.3 5.2Z" fill="#0a0a0a"/></svg></div></div>
<div class="cell" style="left:542px;width:54px;"><div class="cb" style="left:21px;top:9px;"></div></div>
<div class="cell" style="left:596px;width:53px;"><div class="cb" style="left:20px;top:9px;"><svg viewBox="1 1 9 9"><path d="M2.2 6.3L4.3 8.8L5.1 8.8L9 2.4L8.2 2L4.6 6.6L3.3 5.2Z" fill="#0a0a0a"/></svg></div></div>
<div class="cell" style="left:649px;width:54px;"><div class="cb" style="left:21px;top:9px;"></div></div>
<div class="cell" style="left:703px;width:53px;"><div class="cb" style="left:20px;top:9px;"></div></div>
<div class="cell" style="left:756px;width:54px;"><div class="cb" style="left:20px;top:9px;"></div></div>
<div class="cell" style="left:810px;width:53px;"><div class="cb" style="left:20px;top:9px;"></div></div>
<div class="cell" style="left:863px;width:54px;"><div class="cb" style="left:20px;top:9px;"></div></div>
<div class="cell" style="left:917px;width:53px;"><div class="cb" style="left:20px;top:9px;"></div></div>
<div class="cell" style="left:970px;width:53px;"><div class="cb" style="left:20px;top:9px;"></div></div>
<div class="cell" style="left:1023px;width:54px;"><div class="cb" style="left:21px;top:9px;"></div></div>
<div class="cell" style="left:1077px;width:44px;"><div class="cb" style="left:15px;top:9px;"></div></div>
</div>
<div class="row" style="top:632px;height:31px;">
<div class="cell" style="left:0px;width:54px;"><div class="id" style="line-height:30px;padding-top:2px;">50</div></div>
<div class="cell" style="left:54px;width:110px;"><div class="tx" style="line-height:30px;padding-left:3px;padding-top:2px;">Décision</div></div>
<div class="cell" style="left:164px;width:90px;"></div>
<div class="cell" style="left:254px;width:72px;"></div>
<div class="cell" style="left:326px;width:63px;"><div class="st" style="background:#98fb98;color:#000;top:1px;">validated</div></div>
<div class="cell" style="left:389px;width:100px;"></div>
<div class="cell" style="left:489px;width:53px;"><div class="cb" style="left:20px;top:9px;"></div></div>
<div class="cell" style="left:542px;width:54px;"><div class="cb" style="left:21px;top:9px;"></div></div>
<div class="cell" style="left:596px;width:53px;"><div class="cb" style="left:20px;top:9px;"><svg viewBox="1 1 9 9"><path d="M2.2 6.3L4.3 8.8L5.1 8.8L9 2.4L8.2 2L4.6 6.6L3.3 5.2Z" fill="#0a0a0a"/></svg></div></div>
<div class="cell" style="left:649px;width:54px;"><div class="cb" style="left:21px;top:9px;"></div></div>
<div class="cell" style="left:703px;width:53px;"><div class="cb" style="left:20px;top:9px;"><svg viewBox="1 1 9 9"><path d="M2.2 6.3L4.3 8.8L5.1 8.8L9 2.4L8.2 2L4.6 6.6L3.3 5.2Z" fill="#0a0a0a"/></svg></div></div>
<div class="cell" style="left:756px;width:54px;"><div class="cb" style="left:20px;top:9px;"></div></div>
<div class="cell" style="left:810px;width:53px;"><div class="cb" style="left:20px;top:9px;"></div></div>
<div class="cell" style="left:863px;width:54px;"><div class="cb" style="left:20px;top:9px;"></div></div>
<div class="cell" style="left:917px;width:53px;"><div class="cb" style="left:20px;top:9px;"></div></div>
<div class="cell" style="left:970px;width:53px;"><div class="cb" style="left:20px;top:9px;"></div></div>
<div class="cell" style="left:1023px;width:54px;"><div class="cb" style="left:21px;top:9px;"></div></div>
<div class="cell" style="left:1077px;width:44px;"><div class="cb" style="left:15px;top:9px;"></div></div>
</div>
<div class="row" style="top:663px;height:31px;">
<div class="cell" style="left:0px;width:54px;"><div class="id" style="line-height:30px;padding-top:2px;">49</div></div>
<div class="cell" style="left:54px;width:110px;"><div class="tx" style="line-height:30px;padding-left:3px;padding-top:2px;">Réunion</div></div>
<div class="cell" style="left:164px;width:90px;"></div>
<div class="cell" style="left:254px;width:72px;"></div>
<div class="cell" style="left:326px;width:63px;"><div class="st" style="background:#4169e1;color:#fff;top:1px;">delivered</div></div>
<div class="cell" style="left:389px;width:100px;"></div>
<div class="cell" style="left:489px;width:53px;"><div class="cb" style="left:20px;top:9px;"></div></div>
<div class="cell" style="left:542px;width:54px;"><div class="cb" style="left:21px;top:9px;"></div></div>
<div class="cell" style="left:596px;width:53px;"><div class="cb" style="left:20px;top:9px;"><svg viewBox="1 1 9 9"><path d="M2.2 6.3L4.3 8.8L5.1 8.8L9 2.4L8.2 2L4.6 6.6L3.3 5.2Z" fill="#0a0a0a"/></svg></div></div>
<div class="cell" style="left:649px;width:54px;"><div class="cb" style="left:21px;top:9px;"></div></div>
<div class="cell" style="left:703px;width:53px;"><div class="cb" style="left:20px;top:9px;"><svg viewBox="1 1 9 9"><path d="M2.2 6.3L4.3 8.8L5.1 8.8L9 2.4L8.2 2L4.6 6.6L3.3 5.2Z" fill="#0a0a0a"/></svg></div></div>
<div class="cell" style="left:756px;width:54px;"><div class="cb" style="left:20px;top:9px;"></div></div>
<div class="cell" style="left:810px;width:53px;"><div class="cb" style="left:20px;top:9px;"></div></div>
<div class="cell" style="left:863px;width:54px;"><div class="cb" style="left:20px;top:9px;"></div></div>
<div class="cell" style="left:917px;width:53px;"><div class="cb" style="left:20px;top:9px;"></div></div>
<div class="cell" style="left:970px;width:53px;"><div class="cb" style="left:20px;top:9px;"></div></div>
<div class="cell" style="left:1023px;width:54px;"><div class="cb" style="left:21px;top:9px;"></div></div>
<div class="cell" style="left:1077px;width:44px;"><div class="cb" style="left:15px;top:9px;"></div></div>
</div>
<div class="row" style="top:694px;height:31px;">
<div class="cell" style="left:0px;width:54px;"><div class="id" style="line-height:30px;padding-top:2px;">48</div></div>
<div class="cell" style="left:54px;width:110px;"><div class="tx" style="line-height:30px;padding-left:3px;padding-top:2px;">Réunion</div></div>
<div class="cell" style="left:164px;width:90px;"></div>
<div class="cell" style="left:254px;width:72px;"></div>
<div class="cell" style="left:326px;width:63px;"><div class="st" style="background:#d2691e;color:#000;top:1px;">prepared</div></div>
<div class="cell" style="left:389px;width:100px;"></div>
<div class="cell" style="left:489px;width:53px;"><div class="cb" style="left:20px;top:9px;"></div></div>
<div class="cell" style="left:542px;width:54px;"><div class="cb" style="left:21px;top:9px;"></div></div>
<div class="cell" style="left:596px;width:53px;"><div class="cb" style="left:20px;top:9px;"></div></div>
<div class="cell" style="left:649px;width:54px;"><div class="cb" style="left:21px;top:9px;"></div></div>
<div class="cell" style="left:703px;width:53px;"><div class="cb" style="left:20px;top:9px;"></div></div>
<div class="cell" style="left:756px;width:54px;"><div class="cb" style="left:20px;top:9px;"></div></div>
<div class="cell" style="left:810px;width:53px;"><div class="cb" style="left:20px;top:9px;"></div></div>
<div class="cell" style="left:863px;width:54px;"><div class="cb" style="left:20px;top:9px;"></div></div>
<div class="cell" style="left:917px;width:53px;"><div class="cb" style="left:20px;top:9px;"></div></div>
<div class="cell" style="left:970px;width:53px;"><div class="cb" style="left:20px;top:9px;"></div></div>
<div class="cell" style="left:1023px;width:54px;"><div class="cb" style="left:21px;top:9px;"></div></div>
<div class="cell" style="left:1077px;width:44px;"><div class="cb" style="left:15px;top:9px;"></div></div>
</div>
<div class="row" style="top:725px;height:31px;">
<div class="cell" style="left:0px;width:54px;"><div class="id" style="line-height:30px;padding-top:2px;">47</div></div>
<div class="cell" style="left:54px;width:110px;"><div class="tx" style="line-height:30px;padding-left:3px;padding-top:2px;">Réunion</div></div>
<div class="cell" style="left:164px;width:90px;"></div>
<div class="cell" style="left:254px;width:72px;"></div>
<div class="cell" style="left:326px;width:63px;"><div class="st" style="background:#c0c0c0;color:#000;top:1px;"></div></div>
<div class="cell" style="left:389px;width:100px;"></div>
<div class="cell" style="left:489px;width:53px;"><div class="cb" style="left:20px;top:9px;"></div></div>
<div class="cell" style="left:542px;width:54px;"><div class="cb" style="left:21px;top:9px;"></div></div>
<div class="cell" style="left:596px;width:53px;"><div class="cb" style="left:20px;top:9px;"></div></div>
<div class="cell" style="left:649px;width:54px;"><div class="cb" style="left:21px;top:9px;"></div></div>
<div class="cell" style="left:703px;width:53px;"><div class="cb" style="left:20px;top:9px;"></div></div>
<div class="cell" style="left:756px;width:54px;"><div class="cb" style="left:20px;top:9px;"></div></div>
<div class="cell" style="left:810px;width:53px;"><div class="cb" style="left:20px;top:9px;"></div></div>
<div class="cell" style="left:863px;width:54px;"><div class="cb" style="left:20px;top:9px;"></div></div>
<div class="cell" style="left:917px;width:53px;"><div class="cb" style="left:20px;top:9px;"></div></div>
<div class="cell" style="left:970px;width:53px;"><div class="cb" style="left:20px;top:9px;"></div></div>
<div class="cell" style="left:1023px;width:54px;"><div class="cb" style="left:21px;top:9px;"></div></div>
<div class="cell" style="left:1077px;width:44px;"><div class="cb" style="left:15px;top:9px;"></div></div>
</div>
<div class="abs" style="left:2px;top:97px;width:1px;height:30px;background:#fff;"></div>
<div class="abs" style="left:0;top:527px;width:1px;height:2px;background:#0a6ae0;"></div>
</body></html>
